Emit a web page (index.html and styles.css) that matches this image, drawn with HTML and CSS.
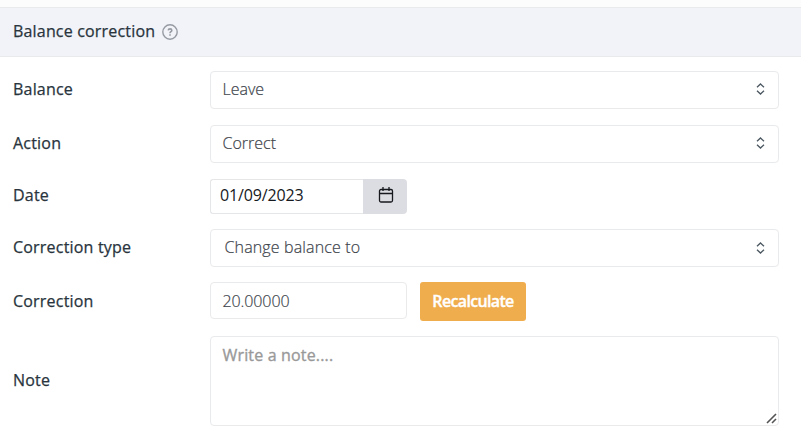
FILE: index.html
```html
<!DOCTYPE html>
<html lang="en">
<head>
<meta charset="utf-8">
<title>Balance correction</title>
<link rel="stylesheet" href="styles.css">
</head>
<body>
<section class="panel">
  <header class="panel-header">
    <h1 class="title">Balance correction</h1>
    <svg class="help" viewBox="0 0 16 16" fill="none" stroke="currentColor"><circle cx="8" cy="8" r="7.2" stroke-width="1.4"/><path d="M6.2 6.4C6.4 4.3 9.8 4.4 9.8 6.4C9.8 7.7 8 7.7 8 9.2M8 10.3v1.4" stroke-width="1.6"/></svg>
  </header>
  <form class="form">
    <div class="row">
      <span class="label">Balance</span>
      <div class="box select"><span class="value">Leave</span><svg class="arrows" viewBox="0 0 9 12"><path d="M1 4.3 4.5 1 8 4.3M1 7.7 4.5 11 8 7.7"/></svg></div>
    </div>
    <div class="row">
      <span class="label">Action</span>
      <div class="box select"><span class="value">Correct</span><svg class="arrows" viewBox="0 0 9 12"><path d="M1 4.3 4.5 1 8 4.3M1 7.7 4.5 11 8 7.7"/></svg></div>
    </div>
    <div class="row row-date">
      <span class="label">Date</span>
      <div class="date">
        <div class="date-value">01/09/2023</div>
        <div class="date-button"><svg class="calendar" viewBox="0 0 16 18" fill="none" stroke="currentColor"><rect x="1.5" y="3.5" width="13" height="12.5" rx="1.5" stroke-width="1.3"/><path d="M1.5 7.5h13M5 1v4M11 1v4" stroke-width="1.3"/></svg></div>
      </div>
    </div>
    <div class="row row-type">
      <span class="label">Correction type</span>
      <div class="box select indented"><span class="value">Change balance to</span><svg class="arrows" viewBox="0 0 9 12"><path d="M1 4.3 4.5 1 8 4.3M1 7.7 4.5 11 8 7.7"/></svg></div>
    </div>
    <div class="row row-amount">
      <span class="label">Correction</span>
      <div class="amount">
        <div class="box amount-value"><span class="value">20.00000</span></div>
        <button class="recalculate" type="button">Recalculate</button>
      </div>
    </div>
    <div class="row">
      <span class="label">Note</span>
      <div class="box note"><span class="placeholder">Write a note....</span><svg class="grip" viewBox="0 0 11 11"><path d="M1 10 10 1M6 10 10 6"/></svg></div>
    </div>
  </form>
</section>
</body>
</html>
```

FILE: styles.css
```css
* { box-sizing: border-box; }
body {
  margin: 0;
  padding-top: 7px;
  background: #fcfcfc;
  font: 400 16px/22px "Open Sans", sans-serif;
  color: #29343d;
}
.panel { min-height: 440px; background: #fff; }
.panel-header {
  display: flex;
  align-items: center;
  gap: 7px;
  height: 50px;
  padding-left: 13px;
  background: #f2f3f8;
  border: solid #e8eaec;
  border-width: 1px 0;
}
.title {
  margin: 0;
  padding-bottom: 2px;
  font: inherit;
  letter-spacing: 0.18px;
  -webkit-text-stroke: 0.25px currentColor;
}
.help { width: 16px; height: 16px; color: #969ba3; }
.form {
  display: flex;
  flex-direction: column;
  gap: 16px;
  padding: 14px 22px 0 13px;
}
.row {
  display: grid;
  grid-template-columns: 197px 1fr;
  align-items: center;
}
.row-type { margin-top: -1px; }
.row-amount { margin: -1px 0; }
.label {
  padding-bottom: 2px;
  letter-spacing: 0.2px;
  -webkit-text-stroke: 0.25px currentColor;
}
.row-date .label { padding-bottom: 3px; }
.box {
  display: flex;
  align-items: center;
  border: 1px solid #e9eaec;
  border-radius: 4px;
  background: #fff;
}
.value {
  padding-bottom: 2px;
  font-weight: 300;
  color: #3d444b;
  -webkit-text-stroke: 0.2px currentColor;
}
.select {
  justify-content: space-between;
  height: 38px;
  padding: 0 13px 0 11.5px;
}
.indented { padding-left: 13.5px; }
.indented .value { letter-spacing: 0.14px; }
.arrows { width: 9px; height: 12px; margin-top: -2px; fill: none; stroke: #4b5760; stroke-width: 1.3; }
.indented .arrows { margin-top: 0; }
.date { display: flex; width: 197px; height: 35px; }
.date-value {
  flex: 1;
  padding: 4px 9px;
  border: 1px solid #e4e6e8;
  border-right: 0;
  border-radius: 3px 0 0 3px;
  color: #16191d;
  letter-spacing: -0.15px;
}
.date-button {
  display: flex;
  justify-content: center;
  align-items: center;
  width: 44px;
  padding: 0 0 3px 2px;
  border-radius: 0 4px 4px 0;
  background: #dcdde2;
  color: #16191d;
}
.calendar { width: 16px; height: 18px; }
.amount { display: flex; align-items: flex-start; gap: 13px; }
.amount-value { width: 197px; height: 37px; padding-left: 11.5px; }
.amount-value .value { padding-bottom: 0; letter-spacing: -0.1px; }
.recalculate {
  width: 106px;
  height: 39px;
  padding: 0 0 2px;
  border: 0;
  border-radius: 3px;
  background: #f0ad4e;
  color: #fff;
  font: 600 16px/22px "Open Sans", sans-serif;
  letter-spacing: -0.65px;
  -webkit-text-stroke: 0.35px currentColor;
}
.note {
  position: relative;
  align-items: flex-start;
  height: 90px;
  padding: 7px 11.5px;
}
.placeholder {
  color: #999;
  letter-spacing: 0.16px;
  -webkit-text-stroke: 0.35px currentColor;
}
.grip {
  position: absolute;
  right: 1px;
  bottom: 1px;
  width: 11px;
  height: 11px;
  fill: none;
  stroke: #555;
  stroke-width: 1.6;
}
```
